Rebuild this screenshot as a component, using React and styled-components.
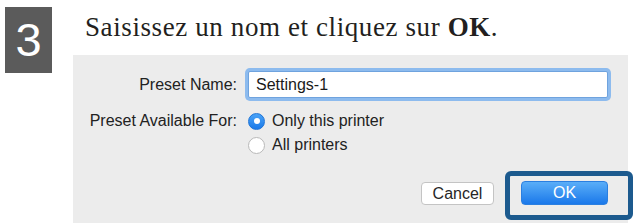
import React from "react";
import styled, { createGlobalStyle } from "styled-components";

const Global = createGlobalStyle`
  html, body { margin: 0; padding: 0; background: #ffffff; }
  body { width: 640px; height: 223px; overflow: hidden; }
`;

const Page = styled.div`
  display: flex;
  align-items: flex-start;
  width: 640px;
  height: 223px;
  overflow: hidden;
`;

const StepBadge = styled.div`
  margin: 7px 0 0 5px;
  width: 47px;
  height: 66px;
  background: #5b5b5b;
  color: #ffffff;
  font-family: "Liberation Sans", Arial, sans-serif;
  font-size: 47px;
  line-height: 66px;
  text-align: center;
  flex-shrink: 0;
`;

const Column = styled.div`
  margin-left: 21px;
  width: 555px;
  display: flex;
  flex-direction: column;
`;

const Title = styled.div`
  padding-left: 12px;
  margin-top: 12px;
  height: 43px;
  font-family: "Liberation Serif", "Times New Roman", serif;
  font-size: 27px;
  letter-spacing: 0.6px;
  line-height: 30px;
  color: #231f20;
  white-space: nowrap;
  b { font-weight: bold; }
`;

const Dialog = styled.div`
  position: relative;
  background: #ececec;
  height: 168px;
  padding: 13px 17px 0 0;
  box-sizing: border-box;
  display: grid;
  grid-template-columns: 164px 1fr;
  column-gap: 8px;
  align-content: start;
  font-family: "Liberation Sans", Arial, sans-serif;
  font-size: 16px;
  color: #222222;
`;

const Label = styled.div`
  text-align: right;
  white-space: nowrap;
  align-self: ${(p) => (p.$top ? "start" : "center")};
  line-height: 24px;
  margin-top: ${(p) => (p.$top ? "8px" : "0")};
`;

const TextField = styled.div`
  margin: 3px 3px;
  height: 27px;
  box-sizing: border-box;
  background: #ffffff;
  border: 1px solid #6fa3de;
  border-radius: 2px;
  box-shadow: 0 0 0 3px #8dbbee;
  padding-left: 7px;
  display: flex;
  align-items: center;
  color: #1a1a1a;
`;

const RadioGroup = styled.div`
  margin-top: 8px;
  display: flex;
  flex-direction: column;
`;

const RadioRow = styled.div`
  display: flex;
  align-items: center;
  height: 24px;
  gap: 7px;
  padding-left: 3px;
`;

const RadioDot = styled.span`
  width: 17px;
  height: 17px;
  border-radius: 50%;
  box-sizing: border-box;
  display: flex;
  align-items: center;
  justify-content: center;
  background: ${(p) => (p.$on ? "linear-gradient(#4aa3f7, #1b7ae9)" : "#ffffff")};
  border: 1px solid ${(p) => (p.$on ? "#1f74d6" : "#b9b9b9")};
  &::after {
    content: "";
    display: ${(p) => (p.$on ? "block" : "none")};
    width: 6px;
    height: 6px;
    border-radius: 50%;
    background: #ffffff;
  }
`;

const ButtonRow = styled.div`
  grid-column: 1 / -1;
  margin-top: 24px;
  display: flex;
  justify-content: flex-end;
  gap: 27px;
  padding-right: 3px;
`;

const Button = styled.div`
  height: 24px;
  box-sizing: border-box;
  width: ${(p) => p.$w}px;
  border-radius: 4px;
  display: flex;
  align-items: center;
  justify-content: center;
  font-size: 16px;
  ${(p) =>
    p.$primary
      ? `background: linear-gradient(#5aaef8, #1a78ea); color: #ffffff; border: 1px solid #2b7fe0;`
      : `background: #ffffff; color: #262626; border: 1px solid #c4c4c4; height: 23px; margin-top: 1px;`}
`;

const Highlight = styled.div`
  position: absolute;
  left: 432px;
  top: 116px;
  width: 128px;
  height: 49px;
  box-sizing: border-box;
  border: 5px solid #1c5a8e;
  border-radius: 6px;
  pointer-events: none;
`;

export default function App() {
  return (
    <>
      <Global />
      <Page>
        <StepBadge>3</StepBadge>
        <Column>
          <Title>
            Saisissez un nom et cliquez sur <b>OK</b>.
          </Title>
          <Dialog>
            <Label>Preset Name:</Label>
            <TextField>Settings-1</TextField>
            <Label $top>Preset Available For:</Label>
            <RadioGroup>
              <RadioRow>
                <RadioDot $on />
                Only this printer
              </RadioRow>
              <RadioRow>
                <RadioDot />
                All printers
              </RadioRow>
            </RadioGroup>
            <ButtonRow>
              <Button $w={73}>Cancel</Button>
              <Button $w={87} $primary>
                OK
              </Button>
            </ButtonRow>
            <Highlight />
          </Dialog>
        </Column>
      </Page>
    </>
  );
}
